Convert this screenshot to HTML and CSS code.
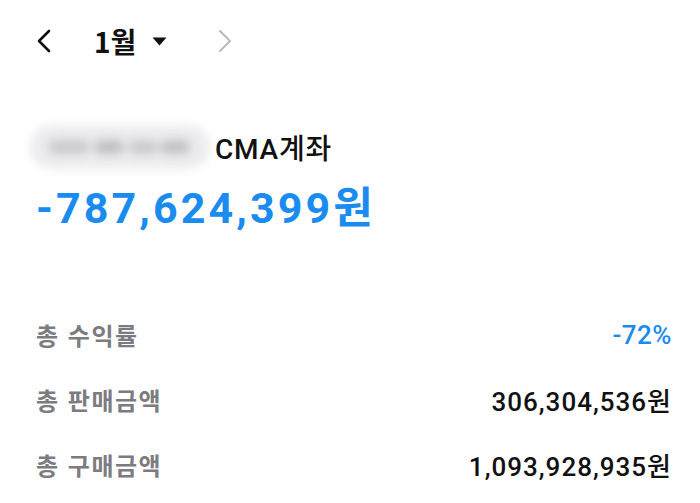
FILE: index.html
```html
<!DOCTYPE html>
<html lang="ko">
<head>
<meta charset="utf-8">
<link rel="stylesheet" href="styles.css">
</head>
<body>
<div class="page">
  <header class="nav">
    <svg class="chev" width="16" height="24" viewBox="0 0 16 24"><path d="M13 2 L3 12 L13 22" fill="none" stroke="#111" stroke-width="2.6" stroke-linecap="round" stroke-linejoin="round"/></svg>
    <div class="month">1월</div>
    <svg class="tri" width="15" height="9" viewBox="0 0 15 9"><path d="M0.5 0.5 H14.5 L7.5 8.5 Z" fill="#111"/></svg>
    <svg class="chev next" width="16" height="24" viewBox="0 0 16 24"><path d="M3 2 L13 12 L3 22" fill="none" stroke="#bdbdbd" stroke-width="2.2" stroke-linecap="round" stroke-linejoin="round"/></svg>
  </header>
  <section class="account">
    <div class="acct-line">
      <div class="blur">
        <span class="blob b1"></span><span class="blob b2"></span><span class="blob b3"></span><span class="blob b4"></span>
      </div>
      <div class="acct-name">CMA계좌</div>
    </div>
    <div class="total">-787,624,399원</div>
  </section>
  <section class="stats">
    <div class="row"><span class="label">총 수익률</span><span class="val blue">-72%</span></div>
    <div class="row"><span class="label">총 판매금액</span><span class="val">306,304,536원</span></div>
    <div class="row"><span class="label">총 구매금액</span><span class="val">1,093,928,935원</span></div>
  </section>
</div>
</body>
</html>
```
FILE: styles.css
```css
html, body { margin: 0; padding: 0; background: #fff; }
body { font-family: "Roboto", "Noto Sans CJK KR", sans-serif; color: #111; }
.page { padding: 0 28px 0 36px; }
.nav { height: 82px; display: flex; align-items: center; }
.chev { display: block; }
.month { margin-left: 42px; font-family: "Noto Sans CJK KR", sans-serif; font-weight: 700; font-size: 28px; line-height: 1; color: #111; }
.tri { margin-left: 16px; display: block; }
.next { margin-left: 50px; }
.account { padding-top: 40px; }
.acct-line { display: flex; align-items: center; height: 50px; }
.blur { position: relative; width: 180px; height: 44px; margin-left: -6px; border-radius: 22px; background: #ececee; filter: blur(5px); }
.blob { position: absolute; top: 15px; height: 14px; border-radius: 7px; background: #cbcbcf; }
.b1 { left: 18px; width: 42px; }
.b2 { left: 64px; width: 30px; background: #c0c0c4; }
.b3 { left: 98px; width: 30px; }
.b4 { left: 130px; width: 30px; background: #c2c2c6; }
.acct-name { margin-left: 5px; font-size: 28px; font-weight: 500; letter-spacing: 0.8px; }
.total { margin-top: 10px; color: #1a8cf0; font-size: 43px; font-weight: 700; line-height: 52px; letter-spacing: 3.1px; }
.stats { margin-top: 68px; }
.row { display: flex; justify-content: space-between; align-items: center; height: 65px; }
.label { font-family: "Noto Sans CJK KR", sans-serif; font-size: 24px; font-weight: 700; letter-spacing: 1.5px; color: #7c7c80; }
.val { font-size: 26px; font-weight: 500; letter-spacing: 1px; color: #111; }
.val.blue { color: #1a8cf0; font-weight: 500; font-size: 26px; letter-spacing: 0.5px; }
```
